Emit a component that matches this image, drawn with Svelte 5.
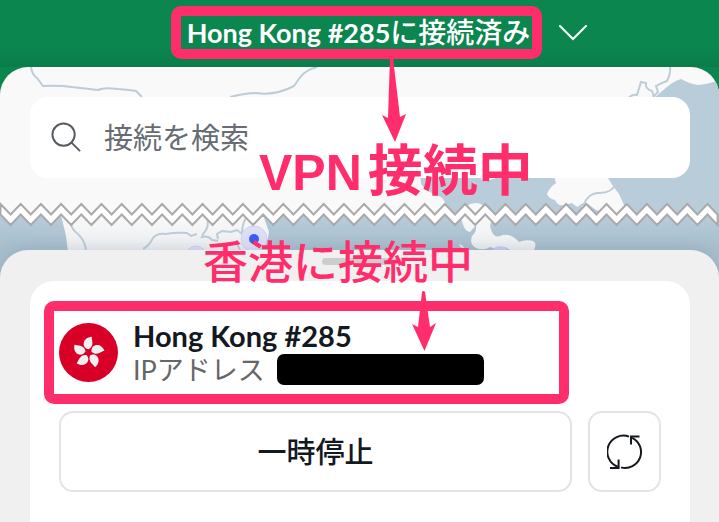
<script lang="ts">
  const zigzagStep = 20.2;
  const zigzagCount = 36;
  const petals = [0, 72, 144, 216, 288];

  let query = $state("");

  function zigzag(peakY: number, valleyY: number): string[] {
    const points: string[] = [];
    for (let i = 0; i < zigzagCount; i++) {
      const x = 0.5 + i * zigzagStep;
      points.push(`${x.toFixed(1)},${peakY}`);
      points.push(`${(x + zigzagStep / 2).toFixed(1)},${valleyY}`);
    }
    return points;
  }

  const upperEdge = zigzag(204, 214.5);
  const lowerEdge = zigzag(214.5, 225);
  const tear = [...upperEdge, ...[...lowerEdge].reverse()].join(" ");
</script>

<main class="screen">
  <header class="status">
    <button class="status-toggle" type="button">
      <span class="status-title marked">Hong Kong #285<span class="ja">に接続済み</span></span>
      <svg class="chevron" viewBox="0 0 28 16" aria-hidden="true">
        <path d="M1 1 L14 14 L27 1" />
      </svg>
    </button>
  </header>

  <section class="map">
    <svg
      class="map-art"
      viewBox="0 67 719 223"
      preserveAspectRatio="xMidYMin slice"
      aria-hidden="true"
    >
      <defs>
        <linearGradient id="sea-low" x1="0" y1="0" x2="0" y2="1">
          <stop offset="0" stop-color="#b8ccda" />
          <stop offset="0.4" stop-color="#a9bfce" />
          <stop offset="1" stop-color="#a9bfce" />
        </linearGradient>
        <linearGradient id="land-low" x1="0" y1="0" x2="0" y2="1">
          <stop offset="0" stop-color="#f9f9f9" />
          <stop offset="1" stop-color="#ebedef" />
        </linearGradient>
      </defs>

      <g class="upper-map">
        <rect x="0" y="67" width="719" height="150" fill="#f9f9f9" />
        <path
          class="sea"
          d="M654 98 L667 87 Q674 81 681 79 Q690 84 698 85 Q710 84 719 80 V220 H446 Q449 204 441 197 Q426 192 421 184 L420 174 L650 174 Z"
        />
        <path
          class="land"
          d="M554 176 L556 183 Q549 188 547 194 Q549 199 555 200 Q558 207 565 205 L572 203 Q580 211 588 204 L596 210 L620 216 L628 214 L619 194 Q611 184 607 176 Z"
        />
        <path class="land" d="M481 179 Q484 184 490 180 L499 177 L484 176 Z" />
        <path class="land" d="M462 214 Q465 203 476 203 Q485 203 488 214 Z" />
        <path
          class="border"
          d="M31 67 Q32 75 37 78 L43 86 Q58 85 72 87 Q90 89 98 90 Q104 87 118 89 Q130 90 136 91 L142 97"
        />
        <path class="border" d="M230 97 Q246 93 256 93 Q275 96 294 86 C300 78 302 71 317 67" />
        <path class="border" d="M670 67 Q671 74 667 81 Q661 83 656 86 L658 92 L653 97" />
        <path class="border" d="M629 97 Q634 94 637 95 L641 82 L646 83 Q645 89 652 91 L654 97" />
        <path class="border" d="M578 208 Q581 205 584 204 Q588 194 597 193 Q612 194 616 183" />
      </g>

      <g class="lower-map">
        <rect x="0" y="215" width="719" height="75" fill="url(#sea-low)" />
        <path fill="url(#land-low)" d="M61 215 L66 236 L68 252 H258 Q268 244 269 232 L263 215 Z" />
        <path
          fill="url(#land-low)"
          d="M461 216 Q463 231 470 232 L476 225 Q477 232 472 236 Q469 244 476 248 Q484 251 490 247 Q498 250 505 247 Q512 252 520 252 H533 Q538 243 533 241 Q526 239 519 242 Q510 232 500 236 Q493 239 490 226 L493 216 Z"
        />
        <path fill="#eceef0" d="M459 244 q4 1 5 4 q-4 0 -5 -4 Z" />
        <path class="border" d="M70 222 Q72 230 78 234 Q86 242 86 252" />
        <path class="border" d="M143 249 Q149 246 153 238 Q157 233 165 234 Q178 232 187 233 L191 236 L197 234" />
        <path class="border" d="M207 218 Q210 227 203 234 L202 237 Q208 235 212 240 L218 241" />
        <path class="border" d="M218 239 L217 234 L222 231 L231 232 L237 230 L242 234 Q242 224 246 218" />
        <path class="border" d="M237 240 Q237 245 240 250" />
        <circle class="halo" cx="196" cy="256" r="10" />
        <circle cx="500" cy="256" r="10" fill="#c8cff0" />
        <circle class="halo" cx="254" cy="239" r="13" />
        <circle cx="254" cy="239" r="5" fill="#3c5cf6" />
      </g>

      <polygon class="tear" points={tear} />
    </svg>

    <label class="search">
      <svg class="search-icon" viewBox="0 0 32 32" aria-hidden="true">
        <circle cx="13" cy="13" r="11.5" />
        <path d="M21 21 L30 30" />
      </svg>
      <input type="text" aria-label="接続を検索" placeholder="接続を検索" bind:value={query} />
    </label>
  </section>

  <section class="sheet">
    <div class="handle"></div>
    <div class="card">
      <div class="server marked">
        <svg class="flag" viewBox="-30 -30 60 60" role="img" aria-label="Hong Kong">
          <circle r="30" fill="#d80027" />
          {#each petals as angle}
            <path
              d="M0.2 -3.2 C-7.5 -4.5 -6.5 -15.5 3.4 -16 C2.8 -13 6.6 -7 0.2 -3.2 Z"
              transform={`rotate(${angle})`}
              fill="#f0f0f0"
            />
          {/each}
        </svg>
        <div class="server-text">
          <div class="server-name">Hong Kong #285</div>
          <div class="server-ip">
            IPアドレス
            <span class="redacted"></span>
          </div>
        </div>
      </div>

      <div class="actions">
        <button class="action pause" type="button">一時停止</button>
        <button class="action refresh" type="button" aria-label="再接続">
          <svg viewBox="-18 -18 36 36" aria-hidden="true">
            <path d="M4 -15.4 A15.9 15.9 0 0 0 -7.2 14.8" />
            <path d="M-15 16 H-6.4 V7.5" />
            <path d="M-4 15.4 A15.9 15.9 0 0 0 7.2 -14.2" />
            <path d="M14.5 -15.5 H6 V-7.5" />
          </svg>
        </button>
      </div>
    </div>
  </section>

  <div class="note note-vpn"><span class="latin">VPN</span>接続中</div>
  <div class="note note-region">香港に接続中</div>
  <svg class="arrow arrow-vpn" viewBox="0 0 24 84" aria-hidden="true">
    <path d="M8 0 H11 L18 59 L24 56 L13 84 L0 57 L6 60 Z" />
  </svg>
  <svg class="arrow arrow-region" viewBox="0 0 24 60" aria-hidden="true">
    <path d="M10 1 Q11.5 -1 13 1 L18 36 L24 32 L12.5 60 L0 33 L6 36 Z" />
  </svg>
</main>

<style>
  :global(body) {
    margin: 0;
    background: #f0f0f0;
  }

  .screen {
    position: relative;
    display: flex;
    flex-direction: column;
    min-height: 100vh;
    overflow: hidden;
    box-sizing: border-box;
    background: #0b864f;
    font-family: Lato, "Noto Sans CJK JP", sans-serif;
    color: #14181f;
  }

  button {
    font: inherit;
    cursor: pointer;
  }

  .marked {
    border: 10px solid #ff2d6b;
    border-radius: 10px;
    box-sizing: border-box;
  }

  .status {
    display: flex;
    justify-content: center;
    padding: 6px 0 8px 39px;
    background: linear-gradient(#0b864f 70%, #0b7c4b);
  }

  .status-toggle {
    display: flex;
    align-items: center;
    gap: 17px;
    padding: 0;
    border: 0;
    background: none;
    color: #fff;
  }

  .status-title {
    padding: 0 2px 0 6px;
    font-size: 27px;
    font-weight: 700;
    line-height: 33px;
    white-space: nowrap;
  }

  .ja {
    font-size: 28px;
    font-weight: 500;
  }

  .chevron {
    width: 28px;
    height: 16px;
    fill: none;
    stroke: #fff;
    stroke-width: 2;
    stroke-linecap: round;
  }

  .map {
    position: relative;
    padding: 30px 29px 72px 30px;
    margin-bottom: -40px;
    height: 121px;
    border-radius: 28px 28px 0 0;
    overflow: hidden;
  }

  .map-art {
    position: absolute;
    inset: 0;
    width: 100%;
    height: 100%;
  }

  .sea {
    fill: #b8ccda;
  }

  .land {
    fill: #f9f9f9;
  }

  .border {
    fill: none;
    stroke: #bdccd7;
    stroke-width: 2;
  }

  .halo {
    fill: #dcdff5;
    stroke: #cdd0f3;
  }

  .tear {
    fill: #fff;
    stroke: #aaa;
    stroke-width: 2;
  }

  .search {
    position: relative;
    display: flex;
    align-items: center;
    gap: 22px;
    height: 81px;
    padding: 0 21px;
    box-sizing: border-box;
    border-radius: 18px;
    background: #fff;
  }

  .search-icon {
    flex: none;
    width: 31px;
    height: 31px;
    fill: none;
    stroke: #555b61;
    stroke-width: 2;
  }

  .search input {
    flex: 1;
    min-width: 0;
    padding: 0 0 4px;
    border: 0;
    outline: 0;
    background: none;
    font: 400 29px/40px "Noto Sans CJK JP", sans-serif;
    color: #14181f;
  }

  .search input::placeholder {
    color: #666c72;
    opacity: 1;
  }

  .sheet {
    position: relative;
    display: flex;
    flex: 1;
    flex-direction: column;
    padding: 8px 29px 0 30px;
    border-radius: 28px 28px 0 0;
    background: #f0f0f0;
    box-shadow: 0 0 16px rgb(60 90 110 / 20%);
  }

  .handle {
    align-self: center;
    width: 77px;
    height: 7px;
    margin-bottom: 16px;
    border-radius: 4px;
    background: #cbcdce;
  }

  .card {
    flex: 1;
    padding: 20px 14px 30px;
    border-radius: 24px 24px 0 0;
    background: #fff;
  }

  .server {
    display: flex;
    align-items: center;
    gap: 15px;
    height: 103px;
    margin-right: 107px;
    padding: 0 5px;
  }

  .flag {
    flex: none;
    width: 59px;
    height: 59px;
  }

  .server-name,
  .server-ip {
    line-height: 34px;
    white-space: nowrap;
  }

  .server-name {
    font-size: 29px;
    font-weight: 700;
  }

  .server-ip {
    display: flex;
    align-items: center;
    gap: 12px;
    font-size: 27px;
    color: #666;
  }

  .redacted {
    width: 207px;
    height: 31px;
    border-radius: 7px;
    background: #000;
  }

  .actions {
    display: flex;
    gap: 16px;
    margin-top: 7px;
    padding: 0 15px;
  }

  .action {
    display: flex;
    align-items: center;
    justify-content: center;
    height: 81px;
    padding: 0;
    border: 2px solid #e4e4e4;
    border-radius: 14px;
    background: #fff;
    color: #14181f;
  }

  .pause {
    flex: 1;
    padding-bottom: 4px;
    font-size: 29px;
    font-weight: 500;
  }

  .refresh {
    flex: none;
    width: 73px;
  }

  .refresh svg {
    width: 36px;
    height: 36px;
    fill: none;
    stroke: #14181f;
    stroke-width: 2;
  }

  .note {
    position: absolute;
    color: #ff2d6b;
    font-family: "Noto Sans CJK JP", sans-serif;
    font-weight: 700;
    white-space: nowrap;
  }

  .note-vpn {
    top: 136px;
    left: 259px;
    font-size: 55px;
    line-height: 60px;
  }

  .latin {
    margin-right: 6px;
    font-family: "Liberation Sans", sans-serif;
    font-size: 50px;
  }

  .note-region {
    top: 235px;
    left: 203px;
    font-size: 45px;
    font-weight: 500;
    line-height: 50px;
  }

  .arrow {
    position: absolute;
    width: 24px;
    fill: #ff2d6b;
  }

  .arrow-vpn {
    top: 58px;
    left: 382px;
    height: 84px;
  }

  .arrow-region {
    top: 291px;
    left: 412px;
    height: 60px;
  }
</style>
